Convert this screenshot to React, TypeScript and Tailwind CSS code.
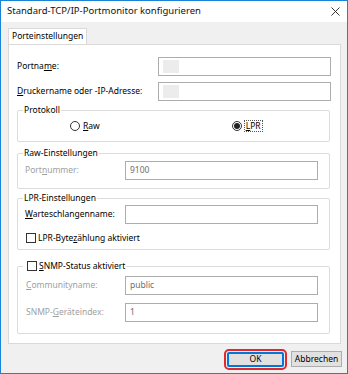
import type { ReactNode } from 'react';

/* ─── helpers ─────────────────────────────────────────────────────── */
function Key({ text, at }: { text: string; at: number }) {
  return (
    <span>
      {text.slice(0, at)}
      <span className="underline underline-offset-[1px]">{text[at]}</span>
      {text.slice(at + 1)}
    </span>
  );
}

function TextBox({ value, w, muted, blank }: { value?: string; w: string; muted?: boolean; blank?: boolean }) {
  return (
    <div
      className={`${w} h-[19px] border border-[#adadad] bg-white flex items-center px-[4px] ${
        muted ? 'text-[#6d6d6d]' : 'text-black'
      }`}
    >
      {blank && <div className="w-[16px] h-[13px] bg-[#ececec]" />}
      {value}
    </div>
  );
}

function Group({ legend, children, className = '' }: { legend: ReactNode; children: ReactNode; className?: string }) {
  return (
    <fieldset className={`border border-[#dcdcdc] rounded-[2px] ${className}`}>
      <legend className="px-[1px] ml-[5px] h-[12px] leading-[12px]">{legend}</legend>
      {children}
    </fieldset>
  );
}

function Check() {
  return <span className="inline-block w-[10px] h-[10px] border border-[#333] bg-white" />;
}

/* ─── dialog ──────────────────────────────────────────────────────── */
export default function App() {
  return (
    <div
      className="w-[348px] h-[374px] bg-[#f0f0f0] border border-[#1883d7] flex flex-col text-[8.5px] text-black"
      style={{ fontFamily: '"Noto Sans", "Open Sans", sans-serif' }}
    >
      {/* title bar */}
      <div className="h-[21px] bg-white flex items-center justify-between pl-[6px] pr-[7px] shrink-0">
        <span className="text-[9.5px] text-[#111]">Standard-TCP/IP-Portmonitor konfigurieren</span>
        <svg viewBox="0 0 10 10" className="w-[9px] h-[9px]" stroke="#222" strokeWidth="1">
          <line x1="0.5" y1="0.5" x2="9.5" y2="9.5" />
          <line x1="9.5" y1="0.5" x2="0.5" y2="9.5" />
        </svg>
      </div>

      {/* tabs */}
      <div className="pl-[7px] pt-[6px] flex">
        <div className="h-[16px] px-[3px] bg-white border border-b-0 border-[#d9d9d9] flex items-center">
          Porteinstellungen
        </div>
      </div>

      {/* tab page */}
      <div className="ml-[7px] w-[333px] h-[300px] bg-white border border-[#d9d9d9] pl-[8px] pr-[9px] pt-[12px] flex flex-col">
        <div className="flex items-center justify-between">
          <Key text="Portname:" at={6} />
          <TextBox w="w-[173px]" blank />
        </div>
        <div className="flex items-center justify-between mt-[6px]">
          <Key text="Druckername oder -IP-Adresse:" at={0} />
          <TextBox w="w-[173px]" blank />
        </div>

        <Group legend="Protokoll" className="mt-[3px] mr-[1px]">
          <div className="h-[25px] pt-[5px] flex items-start">
            <label className="ml-[52px] flex items-center gap-[3px] h-[10px]">
              <span className="w-[10px] h-[10px] rounded-full border border-[#333] bg-white" />
              <Key text="Raw" at={0} />
            </label>
            <label className="ml-[132px] flex items-center gap-[2px] h-[10px]">
              <span className="w-[10px] h-[10px] rounded-full border border-[#333] bg-white flex items-center justify-center">
                <span className="w-[6px] h-[6px] rounded-full bg-[#222]" />
              </span>
              <span className="border border-dotted border-[#555] px-[1px] leading-[10px]">
                <Key text="LPR" at={0} />
              </span>
            </label>
          </div>
        </Group>

        <Group legend="Raw-Einstellungen" className="mt-[5px] mr-[1px]">
          <div className="pt-[2px] pb-[8px] pl-[7px] flex items-center">
            <span className="w-[100px] text-[#a0a0a0]"><Key text="Portnummer:" at={4} /></span>
            <TextBox w="w-[193px]" value="9100" muted />
          </div>
        </Group>

        <Group legend="LPR-Einstellungen" className="mt-[3px] mr-[1px]">
          <div className="pt-[1px] pb-[6px] pl-[7px] flex flex-col">
            <div className="flex items-center">
              <span className="w-[100px]"><Key text="Warteschlangenname:" at={0} /></span>
              <TextBox w="w-[193px]" />
            </div>
            <label className="mt-[9px] ml-[1px] flex items-center gap-[2px] h-[10px]">
              <Check />
              <Key text="LPR-Bytezählung aktiviert" at={8} />
            </label>
          </div>
        </Group>

        <Group
          className="mt-[10px] mr-[1px]"
          legend={
            <span className="flex items-center gap-[2px] ml-[3px]">
              <Check />
              <Key text="SNMP-Status aktiviert" at={0} />
            </span>
          }
        >
          <div className="pt-[4px] pb-[11px] pl-[8px] flex flex-col gap-[8px] text-[#a0a0a0]">
            <div className="flex items-center">
              <span className="w-[99px]"><Key text="Communityname:" at={0} /></span>
              <TextBox w="w-[193px]" value="public" muted />
            </div>
            <div className="flex items-center">
              <span className="w-[99px]"><Key text="SNMP-Geräteindex:" at={5} /></span>
              <TextBox w="w-[193px]" value="1" muted />
            </div>
          </div>
        </Group>
      </div>

      {/* buttons */}
      <div className="flex justify-end items-center gap-[7px] pr-[5px] mt-[7px]">
        <button className="w-[57px] h-[15px] bg-[#e1e1e1] border-2 border-[#0078d7] outline outline-2 outline-offset-[1px] outline-[#e0282e] rounded-[2px] leading-none">
          OK
        </button>
        <button className="w-[51px] h-[16px] bg-[#e1e1e1] border border-[#adadad] leading-none">
          Abbrechen
        </button>
      </div>
    </div>
  );
}
